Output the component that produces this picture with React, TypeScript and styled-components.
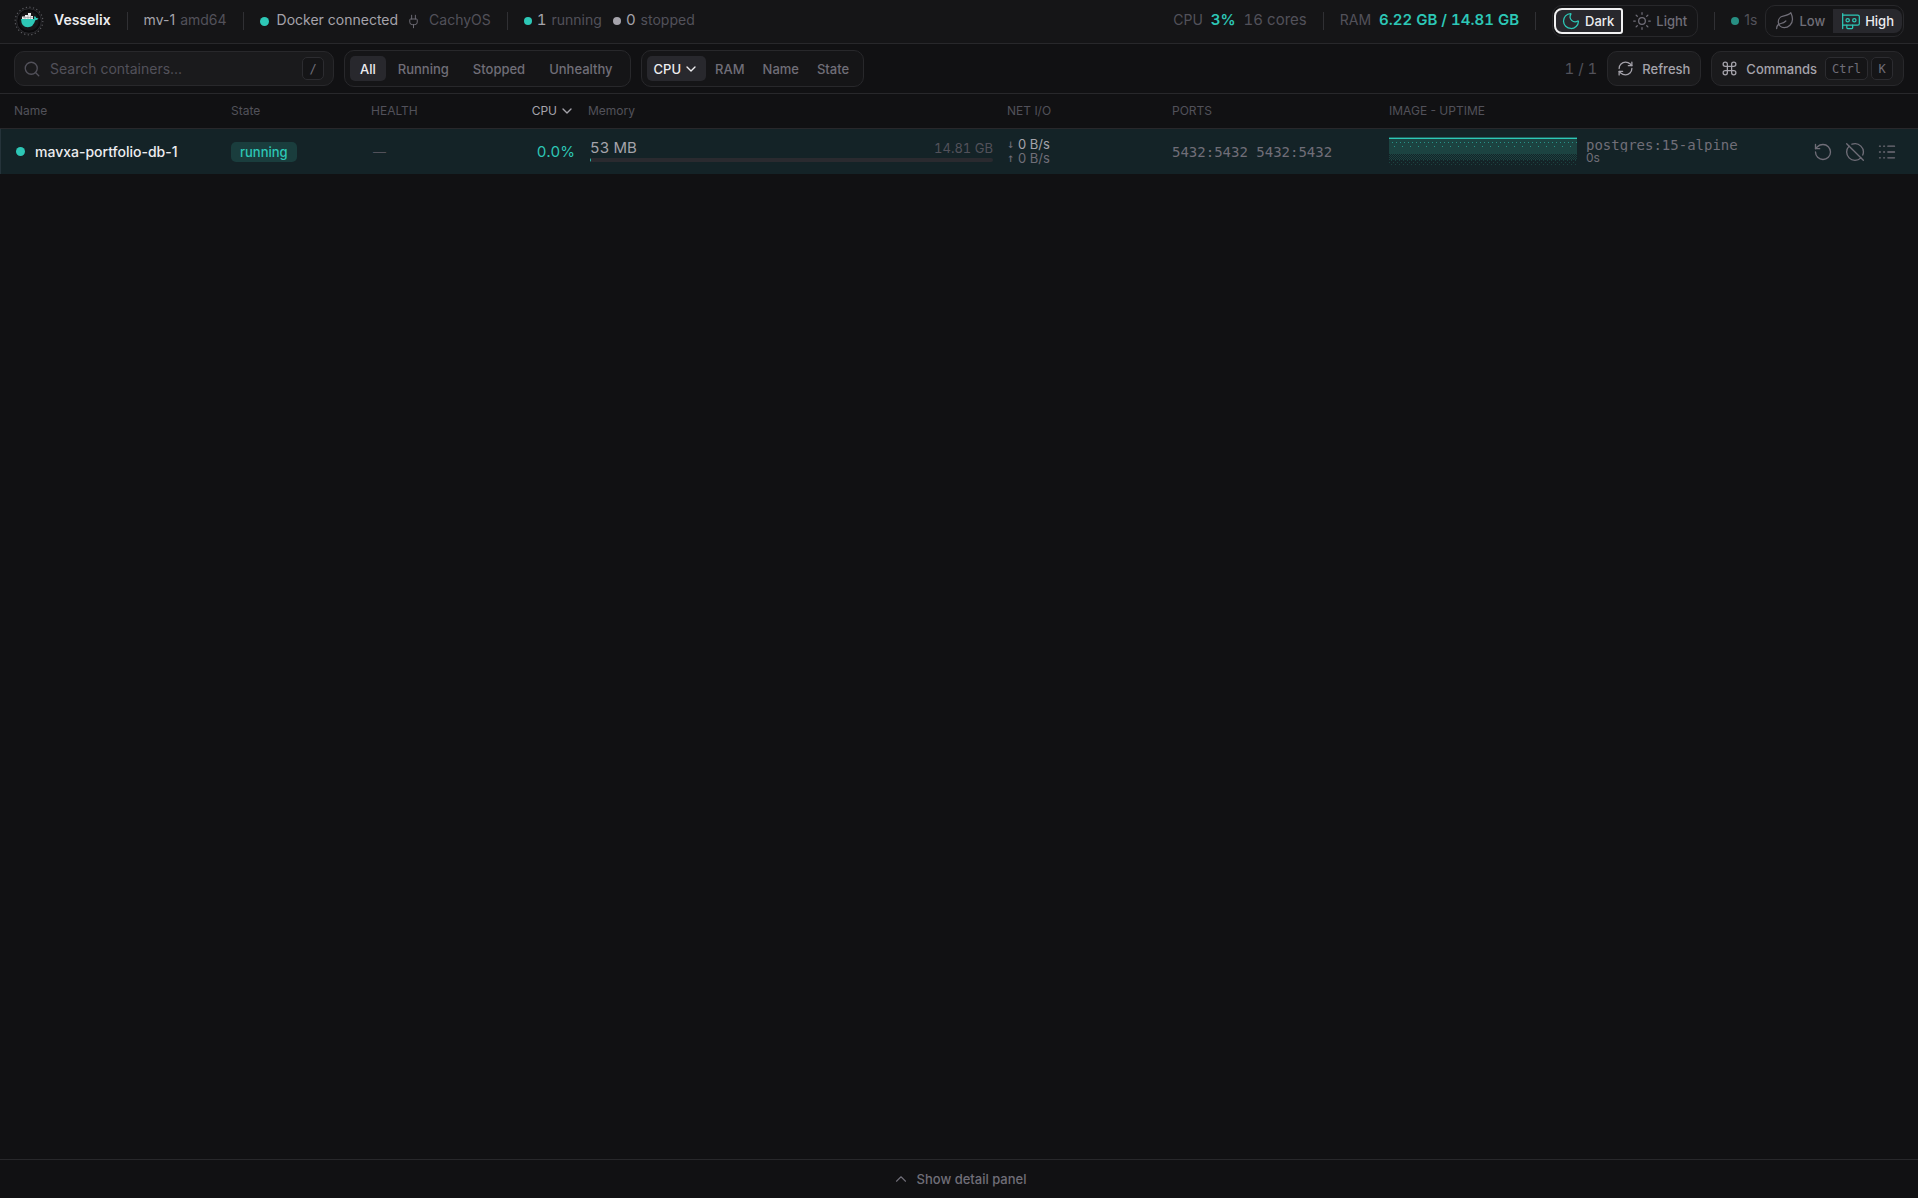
import React from "react";
import styled, { createGlobalStyle, css } from "styled-components";
import {
  Search, Plug, Moon, Sun, Leaf, RefreshCw, Command, ChevronDown, ChevronUp,
  RotateCcw, CircleOff, Logs, GpuIcon,
} from "lucide-react";

const c = {
  bg: "#111113",
  bar: "#151517",
  raised: "#1a1a1c",
  pill: "#28282d",
  line: "#28282b",
  row: "#142327",
  teal: "#2dc7b6",
  bright: "#ededf0",
  text: "#a5a3ab",
  soft: "#706e78",
  muted: "#52515a",
};

const mono = `"DejaVu Sans Mono", "Liberation Mono", monospace`;

const GlobalStyle = createGlobalStyle`
  * { box-sizing: border-box; }
  body {
    margin: 0;
    background: ${c.bg};
    color: ${c.text};
    font-family: Inter, "Open Sans", sans-serif;
    font-size: 14px;
    line-height: 20px;
  }
  button, input, kbd { font: inherit; color: inherit; }
  svg { flex: none; display: block; }
`;

const Page = styled.div`
  min-height: 100vh;
  display: flex;
  flex-direction: column;
`;

const Header = styled.header`
  height: 44px;
  padding: 0 14px 1px;
  display: flex;
  align-items: center;
  justify-content: space-between;
  background: ${c.bar};
  border-bottom: 1px solid ${c.line};
  white-space: nowrap;
`;

const Cluster = styled.div<{ $gap: number }>`
  display: flex;
  align-items: center;
  gap: ${(p) => p.$gap}px;
`;

const Divider = styled.span`
  width: 1px;
  height: 18px;
  background: #303034;
`;

const Brand = styled.h1`
  margin: 0;
  padding-bottom: 2px;
  font-size: 14px;
  line-height: 20px;
  font-weight: 600;
  color: ${c.bright};
`;

type Tone = "text" | "soft" | "muted" | "bright" | "teal";
const Label = styled.span<{ $tone: Tone; $strong?: boolean }>`
  padding-bottom: 2px;
  color: ${(p) => c[p.$tone]};
  font-weight: ${(p) => (p.$strong ? 600 : 400)};
`;

const Figure = styled(Label)`
  font-size: 15px;
  font-variant-numeric: tabular-nums;
`;

const Name = styled.span`
  color: ${c.bright};
  font-weight: 500;
`;

const Dot = styled.span<{ $color: string; $size: number }>`
  flex: none;
  width: ${(p) => p.$size}px;
  height: ${(p) => p.$size}px;
  border-radius: 50%;
  background: ${(p) => p.$color};
`;

const Segmented = styled.div<{ $tall?: boolean }>`
  display: flex;
  align-items: center;
  height: ${(p) => (p.$tall ? 37 : 32)}px;
  padding: 0 ${(p) => (p.$tall ? 5 : 1)}px;
  border: 1px solid ${c.line};
  border-radius: 10px;
  background: ${c.bar};
`;

const Segment = styled.button<{ $active?: boolean; $pad: number }>`
  display: flex;
  align-items: center;
  gap: 2px;
  height: 25px;
  padding: 0 ${(p) => p.$pad}px;
  border: 0;
  border-radius: 5px;
  background: ${(p) => (p.$active ? c.pill : "transparent")};
  color: ${(p) => (p.$active ? c.bright : c.soft)};
  font-size: 13px;
  line-height: 16px;
  font-weight: 500;
`;

const ThemeButton = styled(Segment)<{ $ring?: boolean }>`
  height: 26px;
  gap: 4px;
  ${(p) =>
    p.$ring &&
    css`
      padding: 0 7px 0 5px;
      border: 2px solid #f1f1f2;
      border-radius: 8px 3px 3px 8px;
    `}
`;

const PerfButton = styled(Segment)`
  height: 24px;
  gap: 4px;
  border-radius: ${(p) => (p.$active ? "0 8px 8px 0" : "8px 0 0 8px")};
`;

const Toolbar = styled.div`
  height: 50px;
  padding: 0 14px;
  display: flex;
  align-items: center;
  gap: 10px;
  border-bottom: 1px solid ${c.line};
  white-space: nowrap;
`;

const SearchBox = styled.label`
  width: 320px;
  height: 35px;
  padding: 0 9px 0 8px;
  display: flex;
  align-items: center;
  gap: 9px;
  border: 1px solid ${c.line};
  border-radius: 10px;
  background: ${c.raised};
  color: ${c.muted};
`;

const SearchInput = styled.input`
  flex: 1;
  min-width: 0;
  padding: 0;
  border: 0;
  outline: 0;
  background: transparent;
  color: ${c.bright};
  &::placeholder { color: ${c.muted}; opacity: 1; }
`;

const Key = styled.kbd`
  min-width: 22px;
  height: 23px;
  padding: 0 6px;
  display: inline-flex;
  align-items: center;
  justify-content: center;
  border: 1px solid #2c2c30;
  border-radius: 5px;
  background: ${c.bar};
  color: ${c.soft};
  font-family: ${mono};
  font-size: 12px;
  line-height: 16px;
`;

const Count = styled.span`
  margin-left: auto;
  color: ${c.muted};
  font-size: 15px;
  font-variant-numeric: tabular-nums;
`;

const Action = styled.button`
  height: 35px;
  padding: 0 10px 0 9px;
  display: flex;
  align-items: center;
  gap: 8px;
  border: 1px solid ${c.line};
  border-radius: 10px;
  background: ${c.raised};
  color: ${c.text};
  font-size: 13px;
  line-height: 16px;
  font-weight: 500;
`;

const Main = styled.main`
  flex: 1;
`;

const Table = styled.table`
  width: 100%;
  table-layout: fixed;
  border-collapse: separate;
  border-spacing: 0;
`;

const Col = styled.col<{ $w?: number }>`
  width: ${(p) => (p.$w ? `${p.$w}px` : "auto")};
`;

const Th = styled.th<{ $first?: boolean; $end?: boolean; $active?: boolean }>`
  height: 35px;
  padding: 0 ${(p) => (p.$end ? 13 : 0)}px 0 ${(p) => (p.$first ? 14 : 0)}px;
  border-bottom: 1px solid ${c.line};
  text-align: ${(p) => (p.$end ? "right" : "left")};
  font-size: 12px;
  line-height: 16px;
  font-weight: 400;
  color: ${(p) => (p.$active ? c.text : c.muted)};
`;

const SortLabel = styled.span`
  display: inline-flex;
  align-items: center;
  gap: 2px;
`;

const Row = styled.tr`
  height: 45px;
  background: ${c.row};
  box-shadow: inset 1px 0 #25333a;
`;

const Td = styled.td<{ $first?: boolean; $end?: boolean; $inset?: boolean }>`
  padding: 0 ${(p) => (p.$end ? 13 : 0)}px 0 ${(p) => (p.$first ? 16 : p.$inset ? 2 : 0)}px;
  text-align: ${(p) => (p.$end ? "right" : "left")};
  white-space: nowrap;
`;

const Badge = styled.span`
  display: inline-block;
  padding: 2px 9px;
  border-radius: 5px;
  background: #1a3d3d;
  color: ${c.teal};
  font-size: 13px;
  line-height: 16px;
  font-weight: 500;
`;

const MemoryCell = styled.div`
  padding: 0 14px 2px 2px;
  font-size: 15px;
  font-variant-numeric: tabular-nums;
`;

const MemoryText = styled.div`
  display: flex;
  justify-content: space-between;
  align-items: center;
  margin-bottom: 1px;
  line-height: 18px;
`;

const Small = styled.span`
  font-size: 13px;
  color: ${c.muted};
  font-variant-numeric: tabular-nums;
`;

const Track = styled.div`
  height: 4px;
  border-radius: 2px;
  background: #2a2a2f;
  overflow: hidden;
`;

const Fill = styled.div`
  height: 100%;
  background: ${c.teal};
`;

const Rates = styled.div`
  padding-bottom: 2px;
`;

const Rate = styled.div<{ $dim?: boolean }>`
  display: flex;
  gap: 3px;
  font-size: 13px;
  line-height: 14px;
  color: ${(p) => (p.$dim ? c.soft : c.text)};
`;

const Arrow = styled.span`
  width: 8px;
  color: ${c.soft};
  font-family: ${mono};
  font-size: 12px;
`;

const Ports = styled.span`
  font-family: ${mono};
  font-size: 14px;
  color: ${c.soft};
`;

const ImageCell = styled.div`
  padding-bottom: 2px;
`;

const ImageText = styled.div`
  overflow: hidden;
  font-family: ${mono};
  font-size: 14px;
  line-height: 14px;
  color: ${c.soft};
`;

const Uptime = styled.div`
  font-size: 12px;
  line-height: 12px;
  color: ${c.soft};
`;

const RowActions = styled.div`
  display: flex;
  gap: 12px;
  color: ${c.soft};
`;

const IconButton = styled.button`
  padding: 0;
  border: 0;
  background: none;
  color: inherit;
`;

const Footer = styled.footer`
  height: 39px;
  border-top: 1px solid ${c.line};
`;

const DetailToggle = styled.button`
  width: 100%;
  height: 100%;
  display: flex;
  align-items: center;
  justify-content: center;
  gap: 7px;
  border: 0;
  background: none;
  color: ${c.soft};
  font-size: 13px;
  line-height: 16px;
  font-weight: 500;
`;

function Logo() {
  return (
    <svg width="30" height="30" viewBox="0 0 30 30" aria-hidden="true">
      <circle cx="15" cy="15" r="13.8" fill="none" stroke="#5a5a5f" strokeWidth="1.2" strokeDasharray="1.2 2.41" />
      <circle cx="15" cy="15" r="12.4" fill="#0b0b0d" stroke="#2b2b2f" strokeWidth="1" />
      <circle cx="15" cy="15" r="9.8" fill="#161618" />
      <path d="M8 10.500h3V9h3V7h3v3h2v3H8z" fill="#ededed" />
      <path d="M11 10.500v2.500M14 9v4M16.500 9v4M9 11.500h10" stroke="#8b8b90" strokeWidth=".5" />
      <path d="M7 13h13.200q-.6-2 .6-3 1.200.8 1.300 2 1.300-.2 2.400.5-1 1.800-3.200 1.800-2 7-7.500 7Q7.300 21.300 7 13z" fill={c.teal} />
    </svg>
  );
}

function Sparkline() {
  return (
    <svg width="188" height="29" viewBox="0 0 188 29" role="img" aria-label="CPU history">
      <defs>
        <pattern id="check" width="2" height="2" patternUnits="userSpaceOnUse">
          <path d="M0 0h1v1H0zM1 1h1v1H1z" fill="#1c4341" />
        </pattern>
        <pattern id="sparse" width="4" height="4" patternUnits="userSpaceOnUse">
          <path d="M0 1h1v1H0zM2 3h1v1H2z" fill="#1c4341" />
        </pattern>
        <pattern id="dots4" width="4" height="29" patternUnits="userSpaceOnUse">
          <path d="M3 5h1v1H3z" fill={c.teal} />
        </pattern>
        <pattern id="dots8" width="8" height="29" patternUnits="userSpaceOnUse">
          <path d="M5 9h1v1H5z" fill={c.teal} />
        </pattern>
      </defs>
      <path d="M0 1h188v16H0z" fill="#1c4341" />
      <path d="M0 17h188v6H0z" fill="url(#check)" />
      <path d="M0 23h188v5H0z" fill="url(#sparse)" />
      <path d="M0 0h188v29H0z" fill="url(#dots4)" opacity=".6" />
      <path d="M0 0h188v29H0z" fill="url(#dots8)" opacity=".6" />
      <path d="M0 0h188v1H0z" fill={c.teal} opacity=".4" />
      <path d="M0 1h188v1H0z" fill={c.teal} />
    </svg>
  );
}

export default function App() {
  return (
    <Page>
      <GlobalStyle />
      <Header>
        <Cluster $gap={16}>
          <Cluster $gap={10}>
            <Logo />
            <Brand>Vesselix</Brand>
          </Cluster>
          <Divider />
          <Cluster $gap={5}>
            <Label $tone="text">mv-1</Label>
            <Label $tone="muted">amd64</Label>
          </Cluster>
          <Divider />
          <Cluster $gap={8}>
            <Dot $color={c.teal} $size={9} />
            <Label $tone="text">Docker connected</Label>
            <Plug size={15} strokeWidth={1.5} color={c.soft} />
            <Label $tone="muted">CachyOS</Label>
          </Cluster>
          <Divider />
          <Cluster $gap={11}>
            <Cluster $gap={5}>
              <Dot $color={c.teal} $size={8} />
              <Figure $tone="text">1</Figure>
              <Label $tone="muted">running</Label>
            </Cluster>
            <Cluster $gap={5}>
              <Dot $color={c.text} $size={8} />
              <Figure $tone="text">0</Figure>
              <Label $tone="muted">stopped</Label>
            </Cluster>
          </Cluster>
        </Cluster>
        <Cluster $gap={16}>
          <Cluster $gap={8}>
            <Label $tone="muted">CPU</Label>
            <Figure $tone="teal" $strong>3%</Figure>
            <Figure $tone="muted">16 cores</Figure>
          </Cluster>
          <Divider />
          <Cluster $gap={8}>
            <Label $tone="muted">RAM</Label>
            <Figure $tone="teal" $strong>6.22 GB / 14.81 GB</Figure>
          </Cluster>
          <Divider />
          <Segmented role="group" aria-label="Theme">
            <ThemeButton $active $ring $pad={8} aria-pressed="true">
              <Moon size={20} strokeWidth={1.5} color={c.teal} />
              Dark
            </ThemeButton>
            <ThemeButton $pad={9}>
              <Sun size={20} strokeWidth={1.5} />
              Light
            </ThemeButton>
          </Segmented>
          <Divider />
          <Cluster $gap={8}>
            <Cluster $gap={5}>
              <Dot $color="#278f83" $size={8} />
              <Label $tone="muted">1s</Label>
            </Cluster>
            <Segmented role="group" aria-label="Performance">
              <PerfButton $pad={8}>
                <Leaf size={20} strokeWidth={1.5} />
                Low
              </PerfButton>
              <PerfButton $active $pad={8} aria-pressed="true">
                <GpuIcon size={20} strokeWidth={1.5} color={c.teal} />
                High
              </PerfButton>
            </Segmented>
          </Cluster>
        </Cluster>
      </Header>

      <Toolbar>
        <SearchBox>
          <Search size={18} strokeWidth={1.8} />
          <SearchInput type="text" placeholder="Search containers..." aria-label="Search containers" />
          <Key>/</Key>
        </SearchBox>
        <Segmented $tall role="group" aria-label="Filter">
          <Segment $active $pad={10}>All</Segment>
          <Segment $pad={12}>Running</Segment>
          <Segment $pad={12}>Stopped</Segment>
          <Segment $pad={12}>Unhealthy</Segment>
        </Segmented>
        <Segmented $tall role="group" aria-label="Sort">
          <Segment $active $pad={7}>
            CPU <ChevronDown size={16} />
          </Segment>
          <Segment $pad={9}>RAM</Segment>
          <Segment $pad={9}>Name</Segment>
          <Segment $pad={9}>State</Segment>
        </Segmented>
        <Count>1 / 1</Count>
        <Action>
          <RefreshCw size={17} strokeWidth={1.8} />
          Refresh
        </Action>
        <Action>
          <Command size={17} strokeWidth={1.8} />
          Commands
          <Cluster $gap={3}>
            <Key>Ctrl</Key>
            <Key>K</Key>
          </Cluster>
        </Action>
      </Toolbar>

      <Main>
        <Table>
          <colgroup>
            <Col $w={231} />
            <Col $w={140} />
            <Col $w={140} />
            <Col $w={77} />
            <Col />
            <Col $w={165} />
            <Col $w={217} />
            <Col $w={424} />
            <Col $w={105} />
          </colgroup>
          <thead>
            <tr>
              <Th $first>Name</Th>
              <Th>State</Th>
              <Th>HEALTH</Th>
              <Th $end $active>
                <SortLabel>CPU <ChevronDown size={16} /></SortLabel>
              </Th>
              <Th>Memory</Th>
              <Th>NET I/O</Th>
              <Th>PORTS</Th>
              <Th>IMAGE - UPTIME</Th>
              <Th aria-label="Actions" />
            </tr>
          </thead>
          <tbody>
            <Row>
              <Td $first>
                <Cluster $gap={10}>
                  <Dot $color={c.teal} $size={9} />
                  <Name>mavxa-portfolio-db-1</Name>
                </Cluster>
              </Td>
              <Td><Badge>running</Badge></Td>
              <Td $inset><Small>—</Small></Td>
              <Td $end><Figure $tone="teal">0.0%</Figure></Td>
              <Td>
                <MemoryCell>
                  <MemoryText>
                    <span>53 MB</span>
                    <Small>14.81 GB</Small>
                  </MemoryText>
                  <Track><Fill style={{ width: `${(53 / 15165) * 100}%` }} /></Track>
                </MemoryCell>
              </Td>
              <Td>
                <Rates>
                  <Rate><Arrow>↓</Arrow>0 B/s</Rate>
                  <Rate $dim><Arrow>↑</Arrow>0 B/s</Rate>
                </Rates>
              </Td>
              <Td><Ports>5432:5432 5432:5432</Ports></Td>
              <Td>
                <Cluster $gap={9}>
                  <Sparkline />
                  <ImageCell>
                    <ImageText>postgres:15-alpine</ImageText>
                    <Uptime>0s</Uptime>
                  </ImageCell>
                </Cluster>
              </Td>
              <Td>
                <RowActions>
                  <IconButton aria-label="Restart"><RotateCcw size={20} strokeWidth={1.6} /></IconButton>
                  <IconButton aria-label="Stop"><CircleOff size={20} strokeWidth={1.6} /></IconButton>
                  <IconButton aria-label="Logs"><Logs size={20} strokeWidth={1.6} /></IconButton>
                </RowActions>
              </Td>
            </Row>
          </tbody>
        </Table>
      </Main>

      <Footer>
        <DetailToggle>
          <ChevronUp size={18} strokeWidth={1.5} />
          Show detail panel
        </DetailToggle>
      </Footer>
    </Page>
  );
}
